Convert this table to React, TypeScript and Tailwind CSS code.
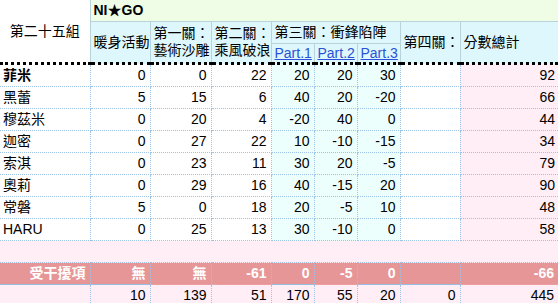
import React from 'react';

type Row = { name: string; bold?: boolean; v: number[]; total: number };

const rows: Row[] = [
  { name: '菲米', bold: true, v: [0, 0, 22, 20, 20, 30], total: 92 },
  { name: '黑蕾', v: [5, 15, 6, 40, 20, -20], total: 66 },
  { name: '穆茲米', v: [0, 20, 4, -20, 40, 0], total: 44 },
  { name: '迦密', v: [0, 27, 22, 10, -10, -15], total: 34 },
  { name: '索淇', v: [0, 23, 11, 30, 20, -5], total: 79 },
  { name: '奧莉', v: [0, 29, 16, 40, -15, 20], total: 90 },
  { name: '常磐', v: [5, 0, 18, 20, -5, 10], total: 48 },
  { name: 'HARU', v: [0, 25, 13, 30, -10, 0], total: 58 },
];

const dot = 'border border-dotted border-[#9dc3e6]';
const head = 'border border-solid border-[#b9d3da] bg-[#ddf7fd] text-left align-middle pl-[3px] leading-[17px]';

export default function App() {
  return (
    <div className="w-[558px] h-[303px] overflow-hidden bg-white text-black text-[14px] font-['Liberation_Sans','Noto_Sans_CJK_TC',sans-serif]">
      <table className="table-fixed border-collapse w-[558px]">
        <colgroup>
          <col className="w-[90px]" />
          <col className="w-[60px]" />
          <col className="w-[61px]" />
          <col className="w-[60px]" />
          <col className="w-[43px]" />
          <col className="w-[43px]" />
          <col className="w-[43px]" />
          <col className="w-[60px]" />
          <col className="w-[98px]" />
        </colgroup>
        <thead>
          <tr className="h-[20px]">
            <td rowSpan={3} className="border-r border-solid border-[#b9d3da] text-center align-middle">
              第二十五組
            </td>
            <td colSpan={8} className="bg-[#effde6] pl-[3px] font-bold">
              NI★GO
            </td>
          </tr>
          <tr className="h-[22px]">
            <td rowSpan={2} className={head}>暖身活動</td>
            <td rowSpan={2} className={head}>第一關：<br />藝術沙雕</td>
            <td rowSpan={2} className={head}>第二關：<br />乘風破浪</td>
            <td colSpan={3} className={head}>第三關：衝鋒陷陣</td>
            <td rowSpan={2} className={head}>第四關：</td>
            <td rowSpan={2} className={`${head} border-r-0`}>分數總計</td>
          </tr>
          <tr className="h-[20px]">
            {['Part.1', 'Part.2', 'Part.3'].map((p) => (
              <td key={p} className={head}>
                <span className="text-[#2a52d6] underline">{p}</span>
              </td>
            ))}
          </tr>
        </thead>
        <tbody>
          {rows.map((r, i) => {
            const top = i === 0 ? ' border-t-[3px] border-t-solid border-t-black' : '';
            return (
              <tr key={r.name} className="h-[22px]">
                <td className={`${dot}${top} border-l-0 pl-[3px] text-left ${r.bold ? 'font-bold' : ''}`}>{r.name}</td>
                {r.v.map((n, j) => (
                  <td
                    key={j}
                    className={`${dot}${top} text-right pr-[4px] ${j >= 3 ? 'bg-[#edfffd]' : 'bg-white'}`}
                  >
                    {n}
                  </td>
                ))}
                <td className={`${dot}${top} bg-white`}></td>
                <td className={`${dot}${top} border-r-0 bg-[#ffeef5] text-right pr-[3px]`}>{r.total}</td>
              </tr>
            );
          })}
          <tr className="h-[22px] bg-[#ffeef5]">
            <td colSpan={9} className="border-t border-dotted border-[#9dc3e6]"></td>
          </tr>
          <tr className="h-[22px] bg-[#e79697] text-white font-bold">
            <td className={`${dot} border-l-0 text-right pr-[4px]`}>受干擾項</td>
            {['無', '無', '-61', '0', '-5', '0', '', '-66'].map((t, j) => (
              <td key={j} className={`${dot} text-right pr-[4px] ${j === 7 ? 'border-r-0' : ''}`}>{t}</td>
            ))}
          </tr>
          <tr className="h-[20px] bg-[#ffeef5]">
            <td className={`${dot} border-l-0`}></td>
            {[10, 139, 51, 170, 55, 20, 0, 445].map((t, j) => (
              <td key={j} className={`${dot} text-right pr-[4px] ${j === 7 ? 'border-r-0' : ''}`}>{t}</td>
            ))}
          </tr>
        </tbody>
      </table>
    </div>
  );
}
